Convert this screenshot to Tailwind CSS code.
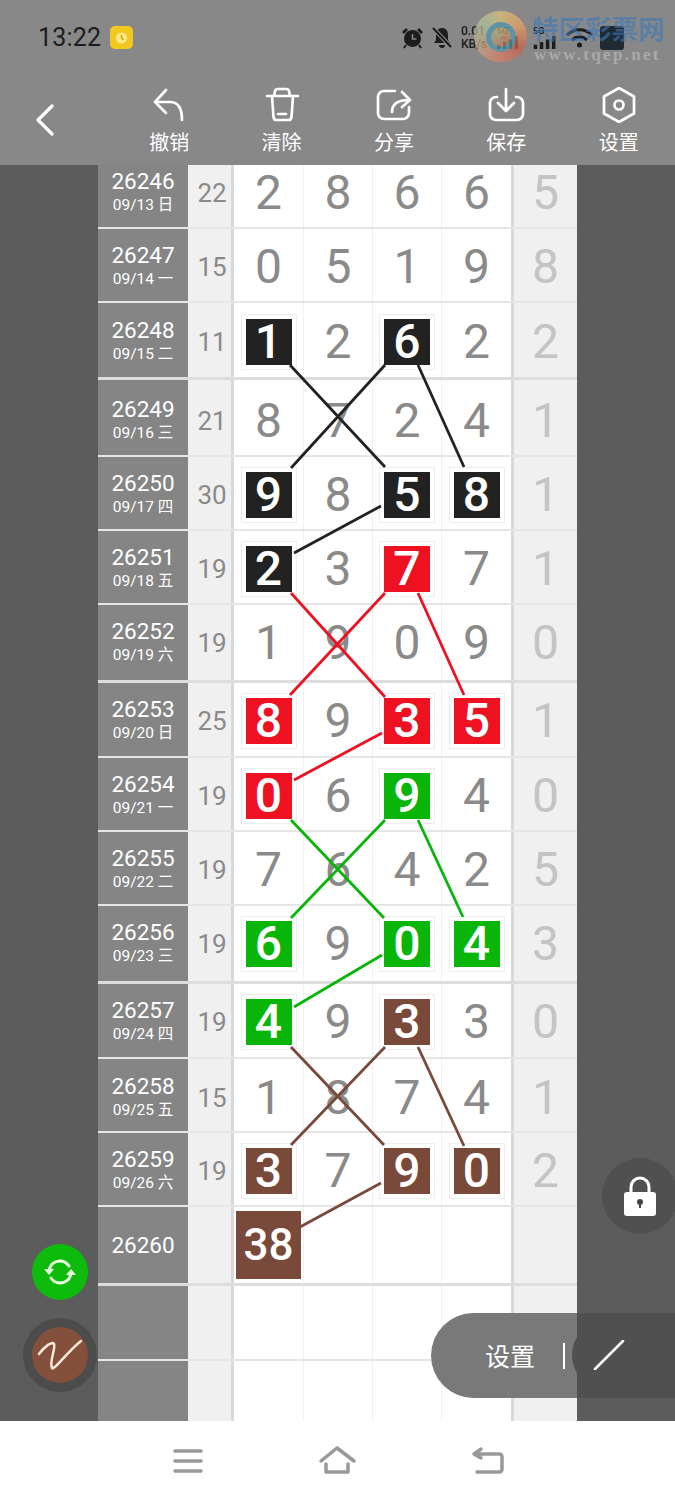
<!DOCTYPE html>
<html lang="zh">
<head>
<meta charset="utf-8">
<script src="https://cdn.jsdelivr.net/npm/@tailwindcss/browser@4"></script>
<title>走势图</title>
</head>
<body class="m-0 bg-white">
<div class="relative w-[675px] h-[1500px] overflow-hidden flex flex-col font-['Roboto','Noto_Sans_CJK_SC',sans-serif]">

  <!-- header -->
  <header class="h-[165px] bg-[#888888] flex flex-col shrink-0">
    <div class="h-[75px] flex items-center">
      <span class="ml-[38px] text-[25px] text-[#1c1c1c] tracking-[0.2px]">13:22</span>
      <span class="ml-[9px] w-[23px] h-[23px] rounded-[5px] bg-[#f2c81e] flex items-center justify-center">
        <svg width="15" height="15" viewBox="0 0 15 15"><circle cx="7.5" cy="8" r="5.5" fill="#ffe98a"/><path d="M7.5 5v3l2 2" stroke="#d8a400" stroke-width="1.5" fill="none"/></svg>
      </span>
      <div class="ml-auto mr-[51px] flex items-center text-[#1c1c1c]">
        <svg class="mr-[7px]" width="23" height="23" viewBox="0 0 23 23" fill="#1c1c1c"><circle cx="11.5" cy="12.5" r="8.5"/><path d="M1 6l4-4 2 2-4 4zM22 6l-4-4-2 2 4 4z"/><path d="M11.5 8v5h4" stroke="#888" stroke-width="1.6" fill="none"/><path d="M5 19l-2 3M18 19l2 3" stroke="#1c1c1c" stroke-width="2"/></svg>
        <svg class="mr-[8px]" width="22" height="23" viewBox="0 0 22 23" fill="#1c1c1c"><path d="M11 2c4 0 6 3 6 7v5l2 3H3l2-3V9c0-4 2-7 6-7z"/><path d="M8 19h6a3 3 0 0 1-6 0z"/><path d="M2 2l18 19" stroke="#888" stroke-width="4"/><path d="M2 2l18 19" stroke="#1c1c1c" stroke-width="2"/></svg>
        <div class="w-[30px] text-[12px] leading-[13px] font-medium"><div>0.01</div><div>KB/s</div></div>
        <div class="ml-[6px] w-[22px] flex flex-col">
          <span class="text-[9px] leading-[10px] font-bold">5G</span>
          <svg width="22" height="13" viewBox="0 0 26 15" fill="#1c1c1c"><rect x="0" y="10" width="4" height="5"/><rect x="7" y="7" width="4" height="8"/><rect x="14" y="4" width="4" height="11"/><rect x="21" y="0" width="4" height="15"/></svg>
        </div>
        <div class="ml-[14px] w-[27px] flex flex-col">
          <span class="text-[9px] leading-[10px] font-bold">5G</span>
          <svg width="24" height="13" viewBox="0 0 26 15" fill="#1c1c1c"><rect x="0" y="10" width="4" height="5"/><rect x="7" y="7" width="4" height="8"/><rect x="14" y="4" width="4" height="11"/><rect x="21" y="0" width="4" height="15"/></svg>
        </div>
        <svg class="ml-[6px]" width="27" height="22" viewBox="0 0 27 22" fill="none" stroke="#1c1c1c" stroke-width="3"><path d="M1 8c7-7 18-7 25 0M6 13c4-4 11-4 15 0"/><circle cx="13.5" cy="18" r="2.5" fill="#1c1c1c" stroke="none"/></svg>
        <div class="ml-[7px] w-[24px] h-[24px] rounded-[3px] bg-[#1f2a33]"></div>
      </div>
    </div>
    <nav class="h-[90px] flex text-white text-[20px] leading-[24px] font-['Noto_Sans_CJK_SC',sans-serif]">
      <div class="w-[113px] pl-[35px] pt-[29px]">
        <svg width="20" height="32" viewBox="0 0 20 32" fill="none" stroke="#fff" stroke-width="3.2" stroke-linecap="round" stroke-linejoin="round"><path d="M17 2L3 16l14 14"/></svg>
      </div>
      <div class="w-[112.4px] flex flex-col items-center pt-[12px]">
        <svg class="h-[36px]" width="34" height="36" viewBox="152 87 34 36" fill="none" stroke="#fff" stroke-width="2.700" stroke-linecap="round" stroke-linejoin="round"><path d="M166 90L155 102l11 11M155 102h15c8 0 12 6 12 18"/></svg>
        <span class="mt-[7px]">撤销</span>
      </div>
      <div class="w-[112.4px] flex flex-col items-center pt-[12px]">
        <svg class="h-[36px]" width="36" height="36" viewBox="263 87 36 36" fill="none" stroke="#fff" stroke-width="2.700" stroke-linecap="round" stroke-linejoin="round"><path d="M266 96h31M273 96l1-5q.5-2 2.500-2h9q2 0 2.500 2l1 5M271 96l1.500 21q.4 3 3 3h12q2.600 0 3-3l1.500-21M277 114h8"/></svg>
        <span class="mt-[7px]">清除</span>
      </div>
      <div class="w-[112.4px] flex flex-col items-center pt-[12px]">
        <svg class="h-[36px]" width="36" height="36" viewBox="377 87 36 36" fill="none" stroke="#fff" stroke-width="2.700" stroke-linecap="round" stroke-linejoin="round"><path d="M396 91h-11a6 6 0 0 0-6 6v16a6 6 0 0 0 6 6h19a6 6 0 0 0 6-6v-6M393 112c0-8 5-12 17-12M403 92l8 8-8 7"/></svg>
        <span class="mt-[7px]">分享</span>
      </div>
      <div class="w-[112.4px] flex flex-col items-center pt-[12px]">
        <svg class="h-[36px]" width="38" height="36" viewBox="487 87 38 36" fill="none" stroke="#fff" stroke-width="2.700" stroke-linecap="round" stroke-linejoin="round"><path d="M497 97h-1a6 6 0 0 0-6 6v11a6 6 0 0 0 6 6h21a6 6 0 0 0 6-6v-11a6 6 0 0 0-6-6h-1M506 89v21M498 103l8 8 8-8"/></svg>
        <span class="mt-[7px]">保存</span>
      </div>
      <div class="w-[112.4px] flex flex-col items-center pt-[12px]">
        <svg class="h-[36px]" width="36" height="36" viewBox="601 87 36 36" fill="none" stroke="#fff" stroke-width="2.700" stroke-linejoin="round"><path d="M619 88l15 8.500v17L619 122l-15-8.500v-17z"/><circle cx="619" cy="105" r="4.500"/></svg>
        <span class="mt-[7px]">设置</span>
      </div>
    </nav>
  </header>

  <!-- main -->
  <main class="h-[1256px] flex bg-[#5c5c5c] shrink-0">
    <div class="w-[98px]"></div>
    <div class="w-[479px] overflow-hidden bg-white text-[48px] leading-none font-[430] text-[#8a8a8a]
      [&>div]:grid [&>div]:grid-cols-[90px_46px_70px_69px_69px_69px_66px] [&>div]:border-b-2 [&>div]:border-[#e6e6e6]
      [&>div>*]:flex [&>div>*]:flex-col [&>div>*]:items-center [&>div>*]:justify-center [&>div>*]:pt-[3px] [&>div>*]:min-h-0
      [&>div>*:nth-child(1)]:bg-[#858585] [&>div>*:nth-child(1)]:text-white [&>div>*:nth-child(1)]:font-normal [&>div>*:nth-child(1)]:text-[22.500px] [&>div>*:nth-child(1)]:leading-[24px]
      [&>div>*:nth-child(2)]:bg-[#f0f0f0] [&>div>*:nth-child(2)]:text-[26px] [&>div>*:nth-child(2)]:font-normal [&>div>*:nth-child(2)]:pl-[5px] [&>div>*:nth-child(2)]:border-r-[3px] [&>div>*:nth-child(2)]:border-[#d9d9d9]
      [&>div>*:nth-child(3)]:border-r [&>div>*:nth-child(4)]:border-r [&>div>*:nth-child(5)]:border-r [&>div>*:nth-child(3)]:border-[#f1f1f1] [&>div>*:nth-child(4)]:border-[#f1f1f1] [&>div>*:nth-child(5)]:border-[#f1f1f1]
      [&>div>*:nth-child(7)]:bg-[#f0f0f0] [&>div>*:nth-child(7)]:text-[#c4c4c4] [&>div>*:nth-child(7)]:border-l-[3px] [&>div>*:nth-child(7)]:border-[#d9d9d9]
      [&_small]:text-[15.500px] [&_small]:leading-[24px]
      [&_b]:w-[46px] [&_b]:h-[46px] [&_b]:flex [&_b]:items-center [&_b]:justify-center [&_b]:text-white [&_b]:font-medium [&_b]:shadow-[0_0_0_4px_#ffffff,0_0_0_5px_#eeeeee]">

      <div class="h-[74px] -mt-[10px]"><div>26246<small>09/13 日</small></div><div>22</div><div>2</div><div>8</div><div>6</div><div>6</div><div>5</div></div>
      <div class="h-[74px]"><div>26247<small>09/14 一</small></div><div>15</div><div>0</div><div>5</div><div>1</div><div>9</div><div>8</div></div>
      <div class="h-[77px] !border-b-[3px] !border-[#dddddd]"><div>26248<small>09/15 二</small></div><div>11</div><div><b class="bg-[#222222]">1</b></div><div>2</div><div><b class="bg-[#222222]">6</b></div><div>2</div><div>2</div></div>
      <div class="h-[77px] [&>*]:!pt-[7px]"><div>26249<small>09/16 三</small></div><div>21</div><div>8</div><div>7</div><div>2</div><div>4</div><div>1</div></div>
      <div class="h-[74px]"><div>26250<small>09/17 四</small></div><div>30</div><div><b class="bg-[#222222]">9</b></div><div>8</div><div><b class="bg-[#222222]">5</b></div><div><b class="bg-[#222222]">8</b></div><div>1</div></div>
      <div class="h-[74px]"><div>26251<small>09/18 五</small></div><div>19</div><div><b class="bg-[#222222]">2</b></div><div>3</div><div><b class="bg-[#ee1122]">7</b></div><div>7</div><div>1</div></div>
      <div class="h-[78px] !border-b-[3px] !border-[#dddddd] [&>*]:!pt-[1px]"><div>26252<small>09/19 六</small></div><div>19</div><div>1</div><div>9</div><div>0</div><div>9</div><div>0</div></div>
      <div class="h-[75px]"><div>26253<small>09/20 日</small></div><div>25</div><div><b class="bg-[#ee1122]">8</b></div><div>9</div><div><b class="bg-[#ee1122]">3</b></div><div><b class="bg-[#ee1122]">5</b></div><div>1</div></div>
      <div class="h-[74px]"><div>26254<small>09/21 一</small></div><div>19</div><div><b class="bg-[#ee1122]">0</b></div><div>6</div><div><b class="bg-[#0ab50a]">9</b></div><div>4</div><div>0</div></div>
      <div class="h-[74px]"><div>26255<small>09/22 二</small></div><div>19</div><div>7</div><div>6</div><div>4</div><div>2</div><div>5</div></div>
      <div class="h-[78px] !border-b-[3px] !border-[#dddddd] [&>*]:!pt-0"><div>26256<small>09/23 三</small></div><div>19</div><div><b class="bg-[#0ab50a]">6</b></div><div>9</div><div><b class="bg-[#0ab50a]">0</b></div><div><b class="bg-[#0ab50a]">4</b></div><div>3</div></div>
      <div class="h-[75px]"><div>26257<small>09/24 四</small></div><div>19</div><div><b class="bg-[#0ab50a]">4</b></div><div>9</div><div><b class="bg-[#79493a]">3</b></div><div>3</div><div>0</div></div>
      <div class="h-[74px] [&>*]:!pt-[5px]"><div>26258<small>09/25 五</small></div><div>15</div><div>1</div><div>8</div><div>7</div><div>4</div><div>1</div></div>
      <div class="h-[74px]"><div>26259<small>09/26 六</small></div><div>19</div><div><b class="bg-[#79493a]">3</b></div><div>7</div><div><b class="bg-[#79493a]">9</b></div><div><b class="bg-[#79493a]">0</b></div><div>2</div></div>
      <div class="h-[79px] !border-b-[3px] !border-[#dddddd]"><div class="!pt-0">26260</div><div></div><div><b class="!w-[65px] !h-[68px] !text-[44px] !shadow-none bg-[#79493a] -mt-[4px]">38</b></div><div></div><div></div><div></div><div></div></div>
      <div class="h-[75px]"><div></div><div></div><div></div><div></div><div></div><div></div><div></div></div>
      <div class="h-[60px] !border-b-0"><div></div><div></div><div></div><div></div><div></div><div></div><div></div></div>
    </div>
    <div class="w-[98px]"></div>
  </main>

  <!-- system nav -->
  <footer class="h-[79px] bg-white relative shrink-0">
    <svg class="w-full h-full" viewBox="0 1421 675 79" fill="none" stroke="#999999" stroke-width="3.500" stroke-linecap="round" stroke-linejoin="round">
      <path d="M175 1451h26M175 1461h26M175 1471h26"/>
      <path d="M321 1461l16-13 17 13M326 1464v8h22v-8" />
      <path d="M481 1449l-7 5 7 4M475 1454h24q3 0 3 3v12q0 3-3 3h-22"/>
    </svg>
  </footer>

  <!-- connecting lines over the table -->
  <svg class="absolute inset-0 pointer-events-none" width="675" height="1500" viewBox="0 0 675 1500" fill="none" stroke-width="2.800">
    <g stroke="#222222"><path d="M290 365L385 467M385 365L291 468M418 365L464 467M381 506L294 553"/></g>
    <g stroke="#ee1122"><path d="M291 593L385 697M385 593L290 695M418 593L464 695M382 733L294 780"/></g>
    <g stroke="#0ab50a"><path d="M291 820L384 918M385 820L291 918M418 820L463 917M382 955L294 1007"/></g>
    <g stroke="#79493a"><path d="M291 1047L384 1145M385 1047L291 1145M418 1047L464 1146M381 1183L300 1227"/></g>
  </svg>

  <!-- watermark -->
  <div class="absolute left-[474px] top-[11px] w-[53px] h-[51px] rounded-full bg-[conic-gradient(#d9c27a,#e9a06a,#c9604a,#d97f6a,#c8a080,#a9c0a0,#d9c27a)] flex items-center justify-center opacity-75">
    <div class="w-[30px] h-[30px] rounded-full border-[5px] border-[#4f9ab0] bg-[#a5986a]/50"></div>
  </div>
  <div class="absolute left-[532px] top-[11px] text-[26.500px] leading-[34px] text-[#3f78b8]/60 font-['Noto_Sans_CJK_SC',sans-serif] font-bold whitespace-nowrap">特区彩票网</div>
  <div class="absolute left-[534px] top-[45px] text-[17px] leading-[20px] text-[#aaaaaa] font-bold font-['Liberation_Serif',serif] tracking-[2.300px] whitespace-nowrap">www.tqep.net</div>

  <!-- floating buttons -->
  <div class="absolute left-[32px] top-[1244px] w-[56px] h-[56px] rounded-full bg-[#0dbb0d] flex items-center justify-center">
    <svg width="32" height="30" viewBox="0 0 32 30" fill="none" stroke="#e8ffe0" stroke-width="3" stroke-linecap="round"><path d="M5 14C6 7 11 4 16 4c4 0 7 2 9 5M27 16c-1 7-6 10-11 10-4 0-7-2-9-5"/><path d="M0 12h10l-5 6z" fill="#e8ffe0" stroke="none"/><path d="M22 18h10l-5-6z" fill="#e8ffe0" stroke="none"/></svg>
  </div>
  <div class="absolute left-[23px] top-[1318px] w-[74px] h-[74px] rounded-full bg-[#4c4c4c] flex items-center justify-center">
    <div class="w-[56px] h-[56px] rounded-full bg-[#84503c] flex items-center justify-center">
      <svg width="46" height="34" viewBox="0 0 46 34" fill="none" stroke="#ffe8dc" stroke-width="2.500" stroke-linecap="round"><path d="M2 16C8 8 15 3 17 6c2 4-5 18-2 24 2 3 16-17 29-27"/></svg>
    </div>
  </div>
  <div class="absolute left-[602px] top-[1158px] w-[76px] h-[76px] rounded-full bg-[#505050] flex items-center justify-center">
    <svg width="34" height="40" viewBox="0 0 34 40" fill="#ffffff"><path d="M8 18v-7a9 9 0 0 1 18 0v7" fill="none" stroke="#fff" stroke-width="3"/><rect x="1" y="16" width="32" height="24" rx="3"/><circle cx="17" cy="26" r="3" fill="#444"/><rect x="16" y="26" width="2" height="6" fill="#444"/></svg>
  </div>

  <!-- pill -->
  <div class="absolute left-[431px] top-[1313px] w-[244px] h-[85px] flex text-white">
    <div class="w-[146px] h-full rounded-l-[43px] bg-[#797979] flex items-center font-['Noto_Sans_CJK_SC',sans-serif] text-[25px] leading-none">
      <span class="ml-[54px]">设置</span>
      <span class="ml-[28px] w-[2px] h-[26px] bg-white"></span>
    </div>
    <div class="w-[98px] h-full bg-[#505050] relative">
      <div class="absolute -left-[5px] top-[7px] w-[70px] h-[70px] rounded-full bg-[#505050]"></div>
      <svg class="absolute left-[16px] top-[27px]" width="32" height="30" viewBox="0 0 32 30" stroke="#ffffff" stroke-width="2.500" stroke-linecap="round"><path d="M2 29L30 1"/></svg>
    </div>
  </div>
</div>
</body>
</html>
